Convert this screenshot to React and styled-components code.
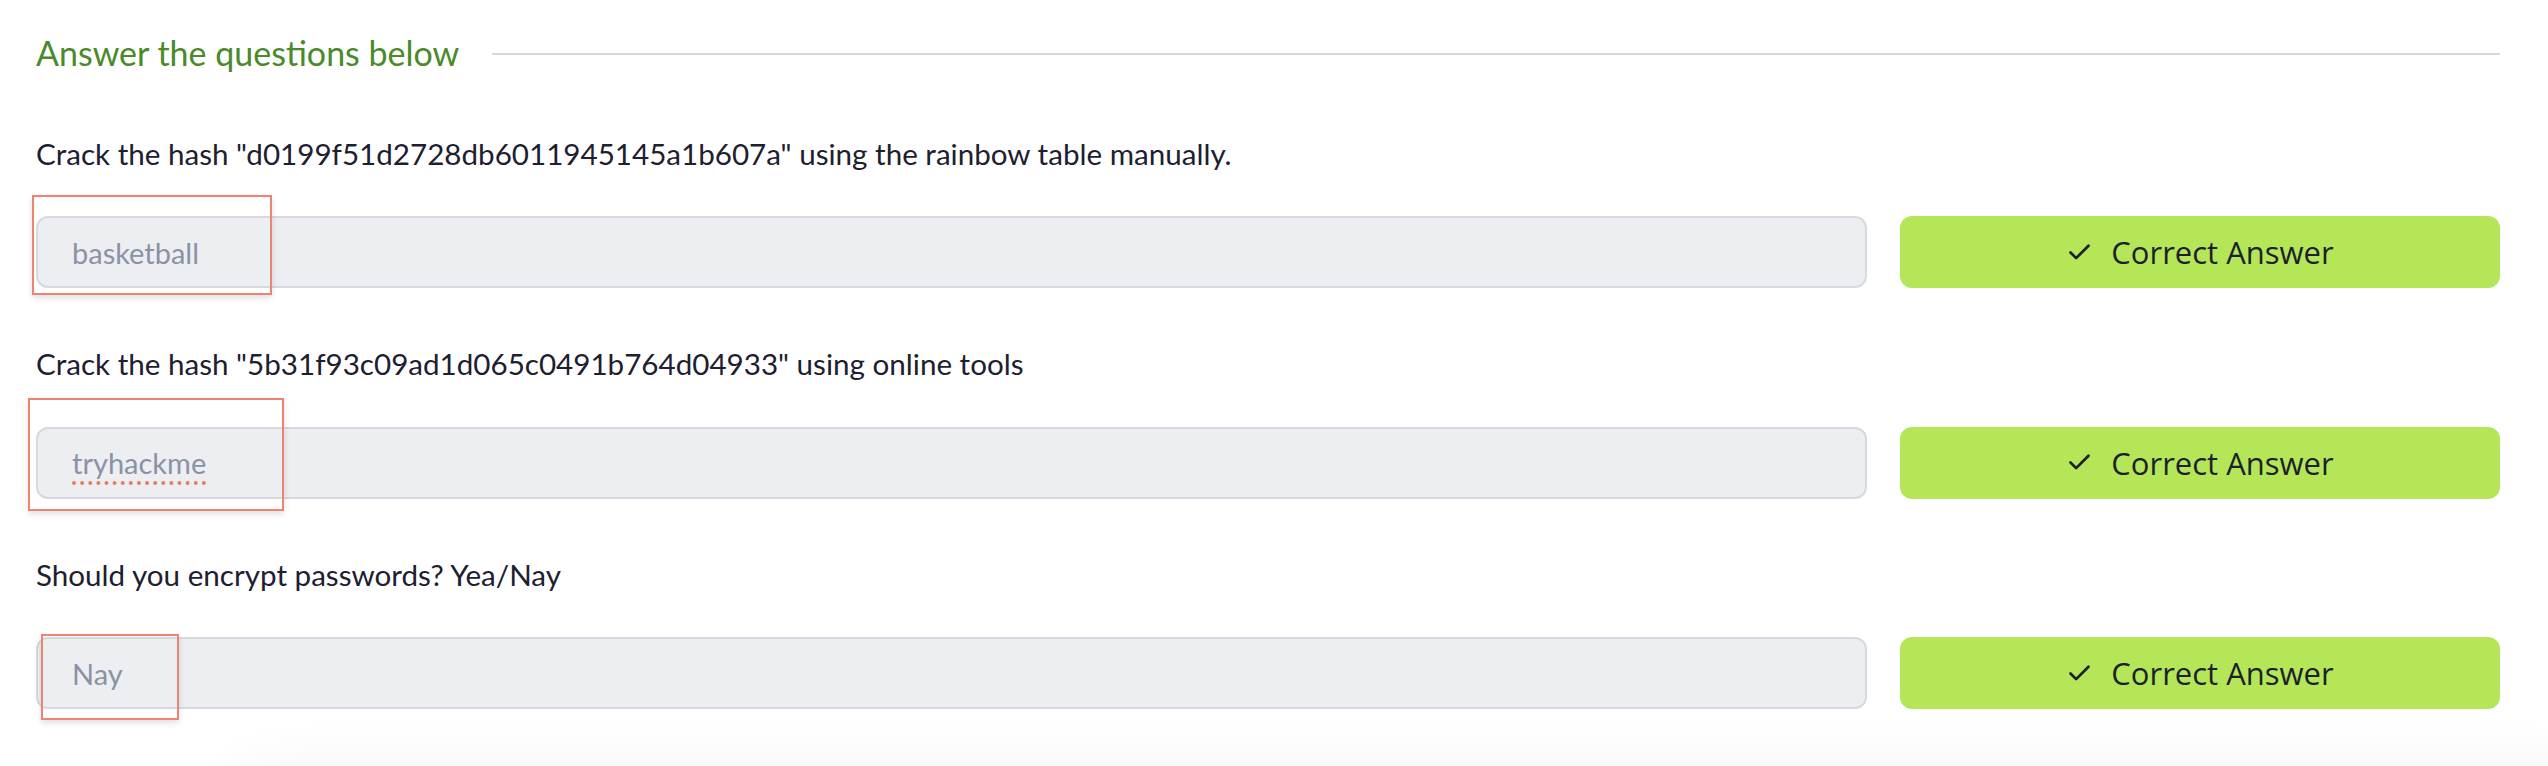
import React from "react";
import styled, { createGlobalStyle } from "styled-components";
import { Check } from "lucide-react";

const Global = createGlobalStyle`
  html, body { margin: 0; padding: 0; background: #ffffff; overflow: hidden; }
  body { font-family: Lato, "Liberation Sans", sans-serif; }
`;

const Page = styled.div`
  width: 2548px;
  height: 766px;
  box-sizing: border-box;
  padding: 33px 48px 0 36px;
  position: relative;
  overflow: hidden;
`;

const HeaderRow = styled.div`
  display: flex;
  align-items: center;
  gap: 33px;
  margin-bottom: 62px;
`;

const Title = styled.h3`
  margin: 0;
  font-family: Lato, sans-serif;
  font-weight: 400;
  font-size: 34px;
  line-height: 1.2;
  color: #4b8a2a;
  white-space: nowrap;
`;

const Rule = styled.div`
  flex: 1;
  height: 2px;
  background: #d5d9df;
  margin-top: 2px;
`;

const Question = styled.div`
  margin-bottom: 58px;
`;

const Prompt = styled.p`
  margin: 0 0 45px;
  font-family: Lato, sans-serif;
  font-size: 29.6px;
  line-height: 1.2;
  color: #1d2030;
  white-space: nowrap;
`;

const AnswerRow = styled.div`
  display: flex;
  gap: 33px;
  height: 72px;
`;

const FieldWrap = styled.div`
  position: relative;
  flex: 1;
`;

const Field = styled.div`
  box-sizing: border-box;
  height: 100%;
  display: flex;
  align-items: center;
  padding: 0 34px;
  background: #edeef2;
  border: 2px solid #d6d9e0;
  border-radius: 12px;
  font-family: Lato, sans-serif;
  font-size: 29px;
  color: #8a92a5;
`;

const Value = styled.span`
  text-decoration: ${(p) => (p.$misspelled ? "underline dotted #ee7a65" : "none")};
  text-decoration-thickness: 4px;
  text-underline-offset: 7px;
`;

const Highlight = styled.div`
  position: absolute;
  box-sizing: border-box;
  border: 2px solid #ee846f;
  box-shadow: 0 3px 6px rgba(0, 0, 0, 0.12);
  pointer-events: none;
  left: ${(p) => p.$left}px;
  top: ${(p) => p.$top}px;
  width: ${(p) => p.$width}px;
  height: ${(p) => p.$height}px;
`;

const SubmitButton = styled.button`
  width: 600px;
  height: 72px;
  display: flex;
  align-items: center;
  justify-content: center;
  gap: 18px;
  border: none;
  border-radius: 12px;
  background: #b5e658;
  color: #1c1f2c;
  font-family: "Open Sans", sans-serif;
  font-size: 31px;
  cursor: pointer;
  padding: 0;
`;

const ShadowCard = styled.div`
  position: absolute;
  left: 240px;
  right: -60px;
  top: 790px;
  height: 200px;
  background: #fff;
  border-radius: 24px;
  box-shadow: 0 -6px 70px rgba(0, 0, 0, 0.09);
`;

const questions = [
  {
    prompt:
      'Crack the hash "d0199f51d2728db6011945145a1b607a" using the rainbow table manually.',
    answer: "basketball",
    box: { left: -4, top: -21, width: 240, height: 100 },
  },
  {
    prompt: 'Crack the hash "5b31f93c09ad1d065c0491b764d04933" using online tools',
    answer: "tryhackme",
    misspelled: true,
    box: { left: -8, top: -29, width: 256, height: 113 },
  },
  {
    prompt: "Should you encrypt passwords? Yea/Nay",
    answer: "Nay",
    box: { left: 5, top: -3, width: 138, height: 86 },
  },
];

export default function App() {
  return (
    <>
      <Global />
      <Page>
        <HeaderRow>
          <Title>Answer the questions below</Title>
          <Rule />
        </HeaderRow>
        {questions.map((q, i) => (
          <Question key={i}>
            <Prompt>{q.prompt}</Prompt>
            <AnswerRow>
              <FieldWrap>
                <Field>
                  <Value $misspelled={q.misspelled}>{q.answer}</Value>
                </Field>
                <Highlight
                  $left={q.box.left}
                  $top={q.box.top}
                  $width={q.box.width}
                  $height={q.box.height}
                />
              </FieldWrap>
              <SubmitButton>
                <Check size={27} strokeWidth={2.4} />
                Correct Answer
              </SubmitButton>
            </AnswerRow>
          </Question>
        ))}
        <ShadowCard />
      </Page>
    </>
  );
}
